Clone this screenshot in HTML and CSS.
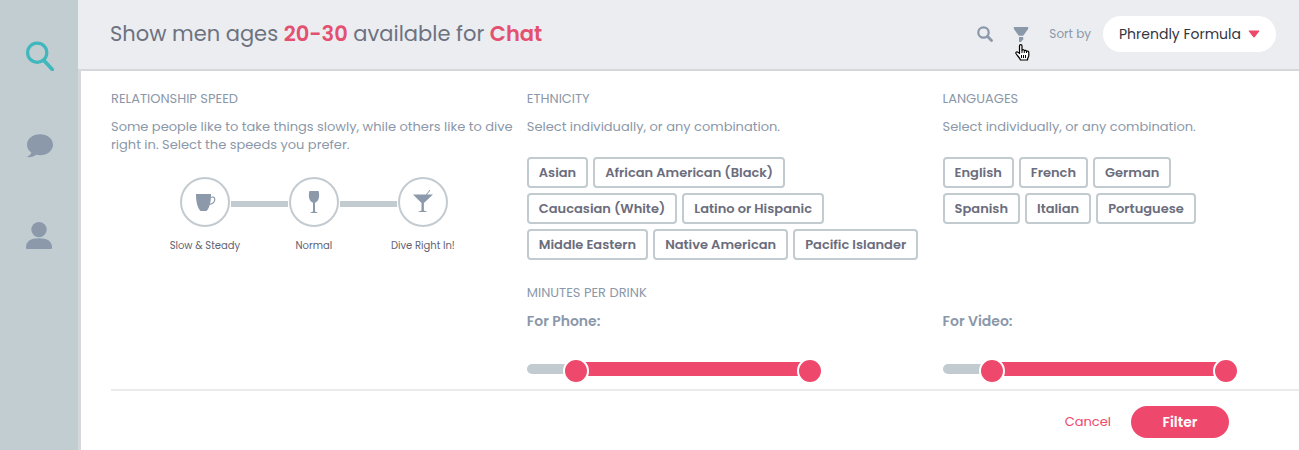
FILE: index.html
```html
<!DOCTYPE html>
<html lang="en">
<head>
    <meta charset="UTF-8">
    <meta name="viewport" content="width=device-width, initial-scale=1">
    <title>Phrendly</title>
    <link rel="stylesheet" href="styles.css">
</head>
<body>
<nav class="sidebar">
    <a href="#" aria-label="Search" class="active">
        <svg width="28" height="30" viewBox="0 0 28 30">
            <circle cx="11.2" cy="11.7" r="9.6" fill="none" stroke="currentColor" stroke-width="3.2"/>
            <path d="M18 19.5l8.3 9" stroke="currentColor" stroke-width="3.6" stroke-linecap="round"/>
        </svg>
    </a>
    <a href="#" aria-label="Messages">
        <svg width="28" height="30" viewBox="0 0 28 30">
            <path d="M14 3.3C6.7 3.3 1 7.9 1 13.7c0 3.2 1.7 6 4.3 7.9C4.9 23.600 3 25 1.100 26.100c3.300.6 6.600-.2 9.100-2.300 1.200.3 2.500.4 3.800.4 7.300 0 13-4.700 13-10.500S21.300 3.300 14 3.300z" fill="currentColor"/>
        </svg>
    </a>
    <a href="#" aria-label="Profile">
        <svg width="28" height="30" viewBox="0 0 28 30">
            <circle cx="13" cy="8.6" r="7.7" fill="currentColor"/>
            <path d="M0 26.500C0 20.500 4.500 17.300 13 17.300s13 3.200 13 9.200c0 1-.6 1.600-1.600 1.600H1.600C.6 28.100 0 27.500 0 26.500z" fill="currentColor"/>
        </svg>
    </a>
</nav>

<main class="main">
    <header class="topbar">
        <h1 class="title">Show men ages <a href="#">20-30</a> available for <a href="#">Chat</a></h1>
        <div class="tools">
            <button type="button" class="icon-button" aria-label="Search">
                <svg width="16" height="16" viewBox="0 0 16 16">
                    <circle cx="6.5" cy="6.5" r="5.2" fill="none" stroke="currentColor" stroke-width="2.2"/>
                    <path d="M10.6 10.6l3.9 3.9" stroke="currentColor" stroke-width="2.8" stroke-linecap="round"/>
                </svg>
            </button>
            <button type="button" class="icon-button" aria-label="Filters">
                <svg width="16" height="16" viewBox="0 0 16 16">
                    <path d="M.8 1h14.400v1.200c0 .6-.2 1-.6 1.500L10.200 9.800H5.800L1.400 3.700C1 3.200.8 2.800.8 2.200z" fill="currentColor"/>
                    <path d="M6 11h4.200v2.500L7.800 16H6z" fill="currentColor"/>
                </svg>
                <svg class="pointer" width="15" height="17" viewBox="0 0 15 17">
                    <path d="M4.500 9.500V2c0-1 .5-1.400 1.200-1.400S7 1 7 2v4c1-.6 2-.3 2.300.5.900-.5 1.800-.1 2.100.7 1.400-.5 2.400.2 2.400 1.500v2.800c0 1.500-1.300 2.400-1.300 4.500H5.400c0-1.800-3.300-4.200-4.400-6.500-.5-1.200.5-2 1.500-1.500.8.4 1.300 1 2 1.500z" fill="#fff" stroke="#000" stroke-width="1.2" stroke-linejoin="round"/>
                    <path d="M7 6v3M9.300 6.500V9M11.500 7.200V9M6.500 11v3M8.500 11v3M10.500 11v3" stroke="#000"/>
                </svg>
            </button>
            <label for="sort">Sort by</label>
            <div class="select-wrap">
                <select id="sort">
                    <option>Phrendly Formula</option>
                    <option>Newest</option>
                </select>
                <svg class="arrow" width="12" height="8" viewBox="0 0 12 8">
                    <path d="M1.500.5h9c.8 0 1 .6.6 1.100L6.800 7c-.5.600-1.100.600-1.600 0L.9 1.600C.5 1.100.7.500 1.500.500z" fill="currentColor"/>
                </svg>
            </div>
        </div>
    </header>

    <form class="filters">
        <div class="grid">
            <section class="column">
                <h2>RELATIONSHIP SPEED</h2>
                <p>Some people like to take things slowly, while others like to dive right in. Select the speeds you prefer.</p>
                <div class="steps">
                    <button type="button" class="step">
                        <span class="circle">
                            <svg width="22" height="24" viewBox="0 0 22 24">
                                <path d="M2 4h15c0 7-1 13-4.500 17h-6C3 17 2 11 2 4z" fill="currentColor"/>
                                <path d="M16.500 7.500c2-1 4.300-.5 4.300 1.700 0 3.200-2.800 4.800-5.300 5.300" fill="none" stroke="currentColor" stroke-width="1.2"/>
                            </svg>
                        </span>
                        Slow &amp; Steady
                    </button>
                    <span class="connector"></span>
                    <button type="button" class="step">
                        <span class="circle">
                            <svg width="22" height="24" viewBox="0 0 22 24">
                                <path d="M6.400 1h9.200c1.300 5.500.4 10-3.600 11.700v8.500c0 .8 2.300.9 3 1.800H7c.7-.9 3-1 3-1.800v-8.500C6 11 5.100 6.500 6.400 1z" fill="currentColor"/>
                            </svg>
                        </span>
                        Normal
                    </button>
                    <span class="connector"></span>
                    <button type="button" class="step">
                        <span class="circle">
                            <svg width="22" height="24" viewBox="0 0 22 24">
                                <path d="M1 4.500h20l-9.100 8.400v7.300c0 .8 2.600.8 3.400 1.800H6.100c.8-1 3.400-1 3.400-1.800v-7.300z" fill="currentColor"/>
                                <path d="M14.500 5l1-2.200 1.300-.8.800-2" fill="none" stroke="currentColor"/>
                            </svg>
                        </span>
                        Dive Right In!
                    </button>
                </div>
            </section>

            <section class="column">
                <h2>ETHNICITY</h2>
                <p>Select individually, or any combination.</p>
                <div class="tags">
                    <button type="button" class="tag">Asian</button>
                    <button type="button" class="tag">African American (Black)</button>
                    <button type="button" class="tag">Caucasian (White)</button>
                    <button type="button" class="tag">Latino or Hispanic</button>
                    <button type="button" class="tag">Middle Eastern</button>
                    <button type="button" class="tag">Native American</button>
                    <button type="button" class="tag">Pacific Islander</button>
                </div>
            </section>

            <section class="column last">
                <h2>LANGUAGES</h2>
                <p>Select individually, or any combination.</p>
                <div class="tags">
                    <button type="button" class="tag">English</button>
                    <button type="button" class="tag">French</button>
                    <button type="button" class="tag">German</button>
                    <button type="button" class="tag">Spanish</button>
                    <button type="button" class="tag">Italian</button>
                    <button type="button" class="tag">Portuguese</button>
                </div>
            </section>

            <section class="column phone">
                <h2>MINUTES PER DRINK</h2>
                <label class="range-label" for="phone-min">For Phone:</label>
                <div class="range">
                    <span class="fill"></span>
                    <input type="range" id="phone-min" min="0" max="15" value="2">
                    <input type="range" aria-label="Phone maximum" min="0" max="15" value="15">
                </div>
            </section>

            <section class="column last video">
                <label class="range-label" for="video-min">For Video:</label>
                <div class="range">
                    <span class="fill"></span>
                    <input type="range" id="video-min" min="0" max="15" value="2">
                    <input type="range" aria-label="Video maximum" min="0" max="15" value="15">
                </div>
            </section>
        </div>

        <footer class="actions">
            <a href="#" class="cancel">Cancel</a>
            <button type="submit" class="submit">Filter</button>
        </footer>
    </form>
</main>
</body>
</html>
```
FILE: styles.css
```css
* {
    box-sizing: border-box;
}
body {
    margin: 0;
    min-height: 100vh;
    display: flex;
    font-family: Poppins, Inter, sans-serif;
    font-size: 13px;
    line-height: 18px;
    color: #8b98a9;
    background: #fff;
}
button, select {
    font-family: inherit;
    color: inherit;
    border: none;
    background: none;
    padding: 0;
    cursor: pointer;
}
svg {
    display: block;
}
.sidebar {
    flex: 0 0 78px;
    display: flex;
    flex-direction: column;
    align-items: center;
    gap: 60px;
    padding: 41px 0 0 2px;
    background: #c1cdd1;
}
.sidebar a {
    color: #8c99aa;
}
.sidebar .active {
    color: #3eb8bd;
}
.main {
    flex: 1;
    min-width: 0;
    display: flex;
    flex-direction: column;
}

/* top bar */
.topbar {
    display: flex;
    align-items: center;
    justify-content: space-between;
    height: 71px;
    padding: 0 23px 2px 32px;
    background: #ebedf1;
    border-bottom: 2px solid #d5d7da;
}
.title {
    margin: 0;
    font-size: 21px;
    line-height: 32px;
    font-weight: 400;
    color: #6d7280;
}
.title a {
    color: #e4506f;
    font-weight: 600;
    text-decoration: none;
}
.tools {
    display: flex;
    align-items: center;
    font-size: 12px;
}
.icon-button {
    position: relative;
    margin-right: 20px;
}
.pointer {
    position: absolute;
    left: 2px;
    top: 18px;
}
.select-wrap {
    position: relative;
    margin-left: 12px;
}
.select-wrap select {
    appearance: none;
    height: 36px;
    padding: 0 35px 0 16px;
    border-radius: 18px;
    background: #fff;
    color: #31343f;
    font-size: 14px;
}
.arrow {
    position: absolute;
    right: 16px;
    top: 14px;
    color: #ed496b;
    pointer-events: none;
}

/* filter panel */
.filters {
    flex: 1;
    padding-left: 30px;
    border-left: 3px solid #d5d7da;
}
.grid {
    display: grid;
    grid-template-columns: 7fr 7fr 6fr;
    row-gap: 24px;
    padding: 19px 0 5px;
    border-bottom: 2px solid #ebebec;
}
.column {
    padding-right: 10px;
}
.last {
    grid-column: 3;
    padding-right: 60px;
}
.column h2 {
    margin: 0 0 10px;
    font-size: 13px;
    line-height: 18px;
    font-weight: 400;
}
.column p {
    margin: 0;
}
.steps {
    display: flex;
    justify-content: center;
    margin-top: 23px;
}
.step {
    width: 50px;
    display: flex;
    flex-direction: column;
    align-items: center;
    gap: 12px;
    font-size: 10px;
    line-height: 14px;
    white-space: nowrap;
    color: #5f6473;
}
.circle {
    width: 50px;
    height: 50px;
    display: flex;
    align-items: center;
    justify-content: center;
    border: 2px solid #c3cbd0;
    border-radius: 50%;
    color: #8c99aa;
}
.connector {
    width: 57px;
    height: 6px;
    margin: 24px 1px 0;
    background: #c1cbd0;
}
.tags {
    display: flex;
    flex-wrap: wrap;
    gap: 5px;
    margin-top: 21px;
}
.tag {
    height: 31px;
    padding: 0 10px;
    border: 2px solid #c1cbd0;
    border-radius: 4px;
    font-size: 13px;
    font-weight: 600;
    color: #6b6d7d;
}
.phone {
    grid-column: 2;
}
.video {
    align-self: end;
}
.range-label {
    display: block;
    font-size: 14px;
    font-weight: 600;
}

/* double handle slider, the two inputs share one track */
.range {
    position: relative;
    max-width: 296px;
    height: 26px;
    margin-top: 28px;
}
.range::before {
    content: "";
    position: absolute;
    left: 0;
    right: 13px;
    top: 6px;
    height: 10px;
    border-radius: 5px;
    background: #c1cbd0;
}
.range .fill {
    position: absolute;
    left: 49px;
    right: 13px;
    top: 4px;
    height: 14px;
    background: #ee496c;
}
.range input {
    position: absolute;
    left: 0;
    top: 0;
    width: 100%;
    height: 26px;
    margin: 0;
    appearance: none;
    background: none;
    pointer-events: none;
}
.range input::-webkit-slider-thumb {
    appearance: none;
    width: 26px;
    height: 26px;
    border: 2px solid #fff;
    border-radius: 50%;
    background: #ee496c;
    pointer-events: auto;
}
.range input::-moz-range-thumb {
    box-sizing: border-box;
    width: 26px;
    height: 26px;
    border: 2px solid #fff;
    border-radius: 50%;
    background: #ee496c;
    pointer-events: auto;
}

.actions {
    display: flex;
    align-items: center;
    justify-content: flex-end;
    gap: 20px;
    padding: 15px 70px 12px 0;
}
.cancel {
    color: #ed496b;
    text-decoration: none;
}
.submit {
    width: 98px;
    height: 32px;
    border-radius: 16px;
    background: #ee496c;
    color: #fff;
    font-size: 14px;
    font-weight: 600;
}
```
